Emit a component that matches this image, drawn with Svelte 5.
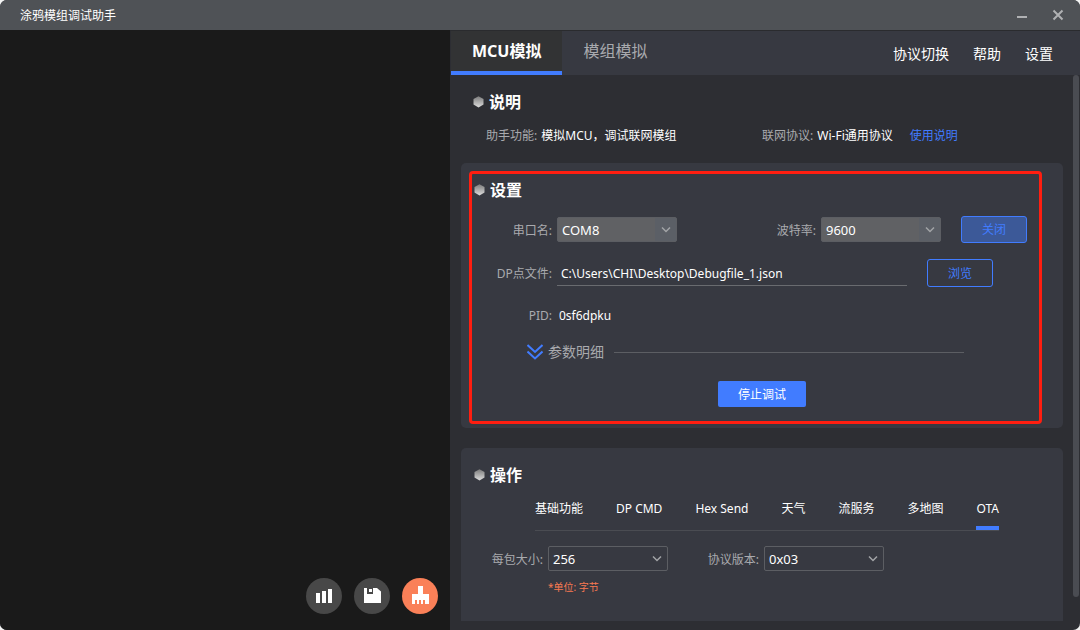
<script>
  let mode = $state('mcu');
  let port = $state('COM8');
  let baud = $state('9600');
  let file = $state('C:\\Users\\CHI\\Desktop\\Debugfile_1.json');
  let packet = $state('256');
  let version = $state('0x03');
  let op = $state('OTA');

  const modes = [
    { id: 'mcu', label: 'MCU模拟' },
    { id: 'module', label: '模组模拟' }
  ];
  const ops = ['基础功能', 'DP CMD', 'Hex Send', '天气', '流服务', '多地图', 'OTA'];
</script>

{#snippet heading(text)}
  <h2 class="heading">
    <svg width="12" height="12" viewBox="0 0 12 12" aria-hidden="true">
      <defs>
        <linearGradient id="gem" x1="0" y1="0" x2="0" y2="1">
          <stop offset="0" stop-color="#7c7c7c" />
          <stop offset="1" stop-color="#dedede" />
        </linearGradient>
      </defs>
      <path d="M6.500 .3 11.500 3v5.600L6.500 11.500l-5-2.900V3z" fill="url(#gem)" />
    </svg>
    {text}
  </h2>
{/snippet}

{#snippet chevron()}
  <svg class="chevron" width="21" height="23" viewBox="0 0 21 23" aria-hidden="true">
    <path d="M7 9.500 11 13.500l4-4" fill="none" stroke="#a2a4a7" stroke-width="1.500" />
  </svg>
{/snippet}

<div class="window">
  <header class="titlebar">
    <h1>涂鸦模组调试助手</h1>
    <div class="controls">
      <button aria-label="最小化">
        <svg width="12" height="12" viewBox="0 0 12 12"><path d="M1 8h10" stroke="#b0b1b3" stroke-width="2" /></svg>
      </button>
      <button aria-label="关闭窗口">
        <svg width="12" height="12" viewBox="0 0 12 12"><path d="M1.500 1.500l9 9M10.500 1.500l-9 9" stroke="#b0b1b3" stroke-width="2" /></svg>
      </button>
    </div>
  </header>

  <div class="body">
    <aside class="log">
      <div class="tools">
        <button class="tool" aria-label="统计">
          <svg width="36" height="36" viewBox="0 0 36 36" fill="#fff"><path d="M10 15h4v10h-4zM16 13h4v12h-4zM22 11h4v14h-4z" /></svg>
        </button>
        <button class="tool" aria-label="保存">
          <svg width="36" height="36" viewBox="0 0 36 36">
            <path d="M10 10h13l4 3.500V25H10z" fill="#fff" />
            <path d="M13 10h6v6h-6z" fill="#484848" />
            <path d="M15 11h3v3h-3z" fill="#fff" />
          </svg>
        </button>
        <button class="tool warm" aria-label="清空">
          <svg width="36" height="36" viewBox="0 0 36 36">
            <path d="M16 8h5v8h6v10H10V16h6z" fill="#fff" />
            <path d="M13 22h2v4h-2zM17 22h2v4h-2zM21 22h2v4h-2z" fill="#fa8058" />
          </svg>
        </button>
      </div>
    </aside>

    <main class="pane">
      <div class="topbar">
        <nav class="modes">
          {#each modes as m}
            <button class="mode" class:active={mode === m.id} onclick={() => (mode = m.id)}>{m.label}</button>
          {/each}
        </nav>
        <nav class="actions">
          <button>协议切换</button>
          <button>帮助</button>
          <button>设置</button>
        </nav>
      </div>

      <div class="scroll">
        <div class="content">
          <section class="about">
            {@render heading('说明')}
            <div class="facts">
              <p>助手功能: <b>模拟MCU，调试联网模组</b></p>
              <p>联网协议: <b>Wi-Fi通用协议</b></p>
              <a href="#guide">使用说明</a>
            </div>
          </section>

          <section class="card settings">
            <div class="frame">
              {@render heading('设置')}
              <div class="row serial">
                <label class="lead" for="port">串口名:</label>
                <div class="select filled">
                  <select id="port" bind:value={port}><option>COM8</option></select>
                  {@render chevron()}
                </div>
                <label class="push" for="baud">波特率:</label>
                <div class="select filled">
                  <select id="baud" bind:value={baud}><option>9600</option><option>115200</option></select>
                  {@render chevron()}
                </div>
                <button class="outline pressed">关闭</button>
              </div>
              <div class="row file">
                <label class="lead" for="file">DP点文件:</label>
                <input id="file" type="text" bind:value={file} />
                <button class="outline">浏览</button>
              </div>
              <div class="row pid">
                <span class="lead">PID:</span>
                <span class="value">0sf6dpku</span>
              </div>
              <div class="details">
                <button>
                  <svg width="16" height="16" viewBox="0 0 16 16" fill="none" stroke="#417cff" stroke-width="2" aria-hidden="true">
                    <path d="M.5 1 8 8l7.500-7M.5 7.500l7.500 7 7.500-7" />
                  </svg>
                  参数明细
                </button>
                <hr />
              </div>
              <div class="submit"><button class="primary">停止调试</button></div>
            </div>
          </section>

          <section class="card operate">
            {@render heading('操作')}
            <nav class="ops">
              {#each ops as o}
                <button class:active={op === o} onclick={() => (op = o)}>{o}</button>
              {/each}
            </nav>
            <div class="row">
              <label class="lead" for="packet">每包大小:</label>
              <div class="select">
                <select id="packet" bind:value={packet}><option>256</option><option>512</option></select>
                {@render chevron()}
              </div>
              <label class="lead second" for="version">协议版本:</label>
              <div class="select">
                <select id="version" bind:value={version}><option>0x03</option></select>
                {@render chevron()}
              </div>
            </div>
            <p class="hint">*单位: 字节</p>
          </section>
        </div>
        <div class="track"><div class="thumb"></div></div>
      </div>
    </main>
  </div>
</div>

<style>
  :global(body) {
    background: #f4f4f4;
  }
  .window {
    box-sizing: border-box;
    min-height: 100vh;
    display: flex;
    flex-direction: column;
    overflow: hidden;
    border-radius: 7px;
    background: #2d2e33;
    color: #fff;
    font: 12px/20px 'Noto Sans', 'Noto Sans CJK SC', sans-serif;
  }
  .window :global(*) {
    box-sizing: border-box;
  }
  h1, h2, p {
    margin: 0;
    font-size: inherit;
    font-weight: 400;
  }
  button, select, input {
    margin: 0;
    padding: 0;
    border: 0;
    background: none;
    color: inherit;
    font: inherit;
    white-space: nowrap;
  }
  button {
    cursor: pointer;
  }
  svg {
    display: block;
    flex: none;
  }
  .titlebar {
    height: 30px;
    padding: 0 16px 0 20px;
    display: flex;
    align-items: center;
    justify-content: space-between;
    background: #4f5256;
  }
  .titlebar h1 {
    padding-top: 2px;
  }
  .controls {
    display: flex;
    gap: 24px;
  }
  .body {
    flex: 1;
    display: grid;
    grid-template-columns: 5fr 7fr;
  }
  .log {
    display: flex;
    flex-direction: column;
    justify-content: flex-end;
    padding: 16px 12px;
    background: #1a1a1a;
  }
  .tools {
    display: flex;
    justify-content: flex-end;
    gap: 12px;
  }
  .tool {
    border-radius: 50%;
    background: #484848;
  }
  .tool.warm {
    background: #fa8058;
  }
  .pane {
    display: flex;
    flex-direction: column;
    padding-left: 1px;
    border-top: 1px solid #2a2b2e;
  }
  .topbar {
    height: 44px;
    display: flex;
    justify-content: space-between;
    background: #373941;
  }
  .modes, .actions {
    display: flex;
  }
  .mode {
    padding: 0 21px;
    border-bottom: 4px solid transparent;
    color: #a9aaae;
    font-size: 16px;
  }
  .mode.active {
    border-color: #417cff;
    background: #323334;
    color: #fff;
    font-weight: 700;
  }
  .actions {
    gap: 24px;
    padding: 2px 27px 0 0;
    font-size: 14px;
  }
  .scroll {
    flex: 1;
    display: flex;
    gap: 10px;
    padding-right: 1px;
  }
  .content {
    flex: 1;
    display: flex;
    flex-direction: column;
    padding: 0 0 9px 10px;
  }
  .track {
    width: 6px;
  }
  .thumb {
    height: 94%;
    border-radius: 3px;
    background: #4a4c52;
  }
  .heading {
    height: 24px;
    display: flex;
    align-items: center;
    gap: 5px;
    font-size: 16px;
    font-weight: 700;
  }
  .about {
    padding: 15px 0 17px 11px;
  }
  .facts {
    display: flex;
    gap: 17px;
    margin-top: 12px;
    padding-left: 14px;
    color: #a9aaae;
  }
  .facts p:first-child {
    flex: 0 0 259px;
  }
  .facts b {
    font-weight: 400;
    color: #fff;
    margin-left: 1px;
  }
  .facts a {
    color: #417cff;
    text-decoration: none;
  }
  .card {
    border-radius: 5px;
    background: #373941;
  }
  .settings {
    padding: 8px 21px 4px 8px;
  }
  .frame {
    padding: 4px 0 14px 1px;
    border: 3px solid #ff1e10;
    border-radius: 4px;
  }
  .row {
    display: flex;
    align-items: center;
    gap: 5px;
    color: #a9aaae;
  }
  .row label {
    padding-top: 2px;
  }
  .lead {
    width: 79px;
    text-align: right;
  }
  .push {
    margin-left: auto;
  }
  .serial {
    margin-top: 14px;
    padding-right: 12px;
  }
  .file {
    margin-top: 16px;
    padding-right: 46px;
  }
  .pid {
    margin-top: 19px;
  }
  .value {
    padding-left: 2px;
    color: #fff;
  }
  .select {
    width: 120px;
    height: 25px;
    display: grid;
    grid-template-columns: 1fr 21px;
    border: 1px solid #5c5e63;
    border-radius: 2px;
    color: #fff;
  }
  .select.filled {
    background: #606164;
  }
  .filled .chevron {
    background: #5b5f66;
  }
  select {
    grid-area: 1 / 1 / 2 / 3;
    appearance: none;
    padding: 1px 0 0 4px;
    z-index: 1;
    font-size: 13px;
    outline: none;
  }
  select option {
    background: #373941;
  }
  .chevron {
    grid-area: 1 / 2 / 2 / 3;
  }
  input {
    flex: 1;
    min-width: 0;
    height: 26px;
    padding: 2px 0 0 4px;
    border-bottom: 1px solid #696b6f;
    color: #fff;
    outline: none;
  }
  .outline {
    width: 66px;
    height: 28px;
    margin-left: 15px;
    padding-top: 1px;
    border: 1px solid #417cff;
    border-radius: 3px;
    color: #417cff;
  }
  .outline.pressed {
    height: 27px;
    background: #3c5998;
  }
  .details {
    display: flex;
    align-items: center;
    gap: 10px;
    margin-top: 16px;
    padding: 0 75px 0 54px;
  }
  .details button {
    display: flex;
    align-items: center;
    gap: 5px;
    color: #a9aaae;
    font-size: 14px;
  }
  .details hr {
    flex: 1;
    margin: 0;
    border: 0;
    border-top: 1px solid #5c5e63;
  }
  .submit {
    margin-top: 19px;
    padding-left: 12px;
    display: flex;
    justify-content: center;
  }
  .primary {
    width: 88px;
    height: 26px;
    padding-top: 2px;
    border-radius: 2px;
    background: #417cff;
  }
  .operate {
    flex: 1;
    margin-top: 20px;
    padding: 15px 64px 0 12px;
    border-radius: 5px 5px 0 0;
  }
  .ops {
    display: flex;
    justify-content: space-between;
    margin: 12px 0 15px 62px;
    border-bottom: 1px solid #4a4c52;
  }
  .ops button {
    padding-bottom: 7px;
    border-bottom: 4px solid transparent;
  }
  .ops button.active {
    border-color: #417cff;
  }
  .operate .lead {
    width: 70px;
  }
  .operate .second {
    width: 86px;
  }
  .hint {
    margin-top: 8px;
    padding-left: 75px;
    color: #f97a52;
    font-size: 10px;
    line-height: 16px;
  }
</style>
